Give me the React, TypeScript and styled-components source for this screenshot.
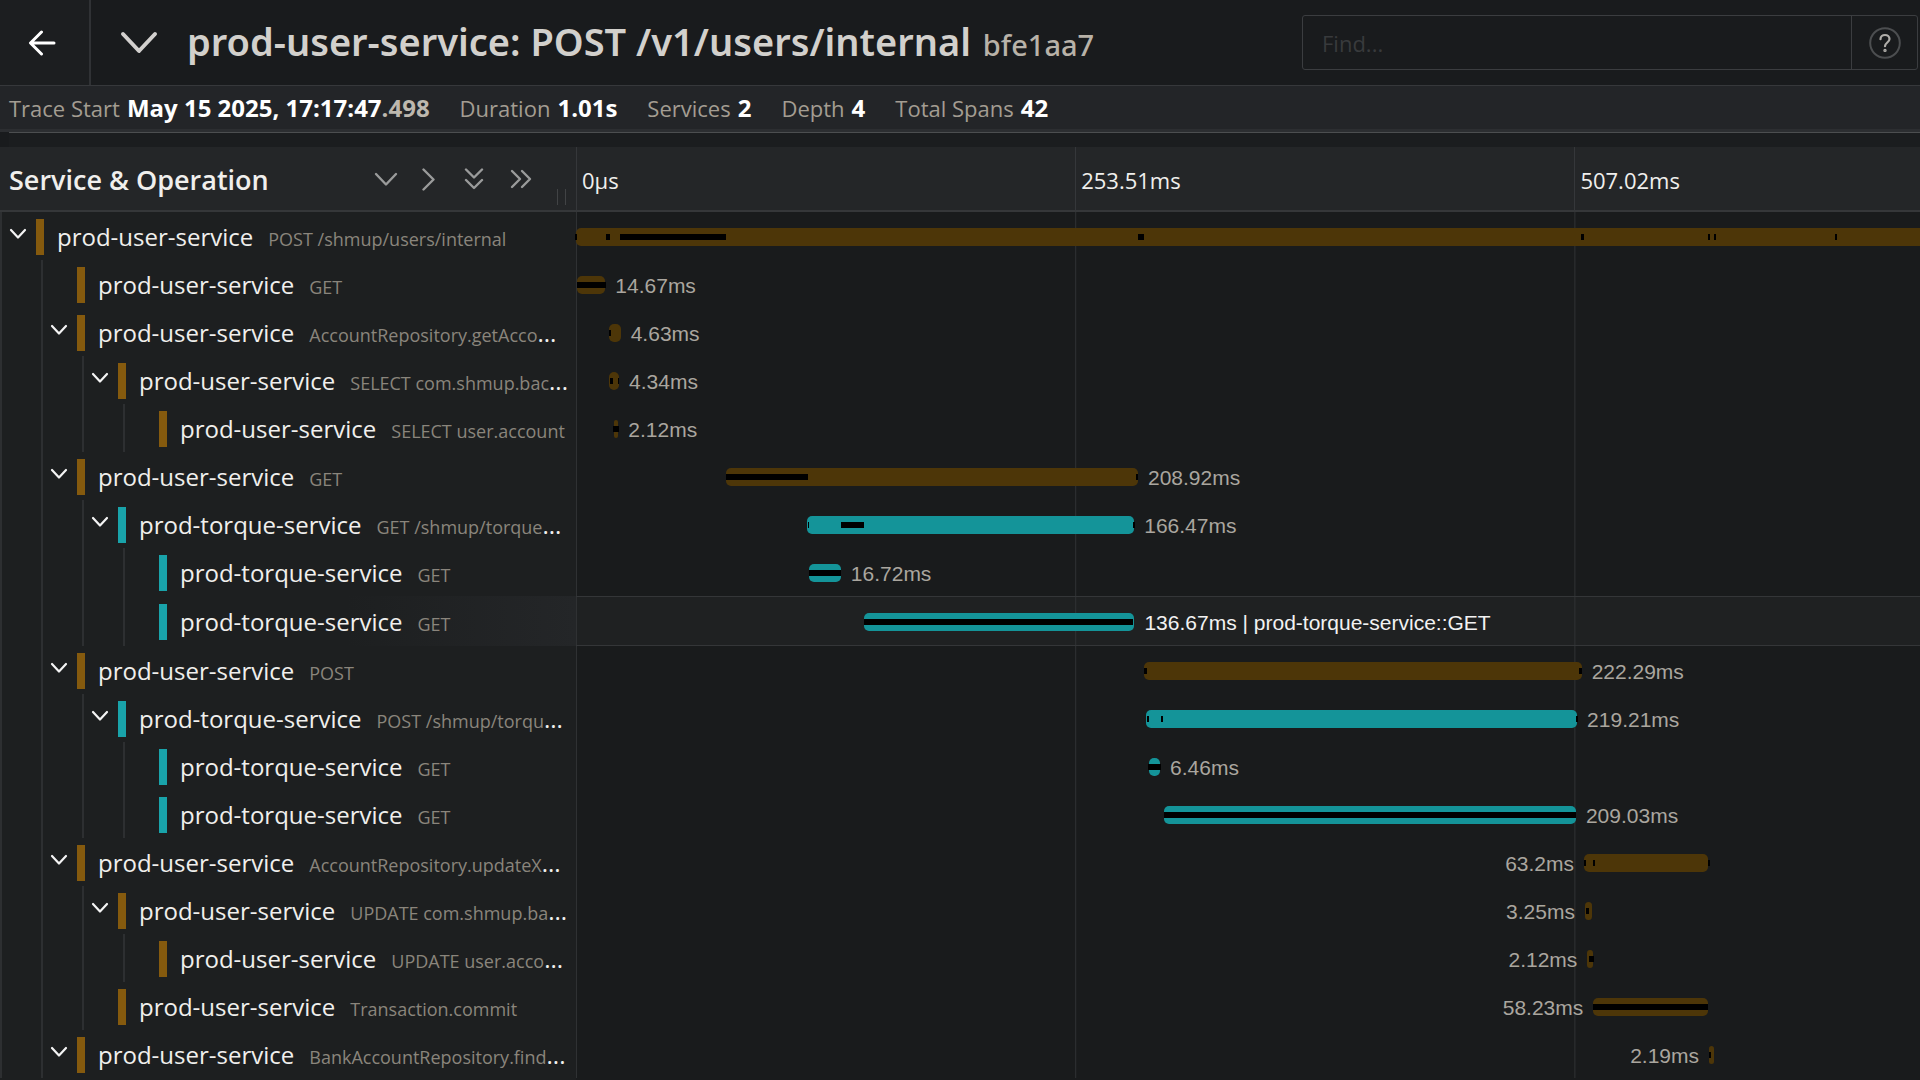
import React from 'react';
import styled, { createGlobalStyle, css } from 'styled-components';

const TOTAL_MS = 1014.04;
const COLORS = {
  user: { swatch: '#855a0e', bar: '#4d3608' },
  torque: { swatch: '#19a3aa', bar: '#149499' },
};

type Service = keyof typeof COLORS;
type Range = [number, number];

interface Span {
  service: Service;
  operation: string;
  clipped?: boolean;
  depth: number;
  open?: boolean;
  range: Range;
  critical: Range[];
  label?: string;
  labelLeft?: boolean;
  active?: boolean;
}

const SPANS: Span[] = [
  { service: 'user', operation: 'POST /shmup/users/internal', depth: 0, open: true, range: [0, 1014.04], critical: [[-0.5, 0.5], [15.2, 17.5], [22.3, 76.2], [285.2, 288.4], [510.6, 511.9], [575, 575.7], [578, 578.7], [639.6, 640.3]] },
  { service: 'user', operation: 'GET', depth: 1, range: [0.5, 14.9], critical: [[0.4, 15.3]], label: '14.67ms' },
  { service: 'user', operation: 'AccountRepository.getAcco', clipped: true, depth: 1, open: true, range: [17, 22.7], critical: [[17, 18]], label: '4.63ms' },
  { service: 'user', operation: 'SELECT com.shmup.bac', clipped: true, depth: 2, open: true, range: [17, 21.9], critical: [[17.3, 19], [21.3, 22.1]], label: '4.34ms' },
  { service: 'user', operation: 'SELECT user.account', depth: 3, range: [19.5, 21.5], critical: [[19, 21.8]], label: '2.12ms' },
  { service: 'user', operation: 'GET', depth: 1, open: true, range: [76.2, 285.4], critical: [[76.2, 117.7], [284.4, 285.6]], label: '208.92ms' },
  { service: 'torque', operation: 'GET /shmup/torque', clipped: true, depth: 2, open: true, range: [117.1, 283.5], critical: [[117.6, 118.4], [134.5, 146.3], [282.9, 284]], label: '166.47ms' },
  { service: 'torque', operation: 'GET', depth: 3, range: [118.1, 134.5], critical: [[118.1, 134.5]], label: '16.72ms' },
  { service: 'torque', operation: 'GET', depth: 3, range: [146.3, 283.6], critical: [[146.3, 282.9]], label: '136.67ms | prod-torque-service::GET', active: true },
  { service: 'user', operation: 'POST', depth: 1, open: true, range: [288.4, 510.7], critical: [[288.4, 290], [509.3, 511]], label: '222.29ms' },
  { service: 'torque', operation: 'POST /shmup/torqu', clipped: true, depth: 2, open: true, range: [289.5, 508.4], critical: [[290, 290.8], [297, 298.2], [507.8, 508.7]], label: '219.21ms' },
  { service: 'torque', operation: 'GET', depth: 3, range: [290.8, 296.6], critical: [[290.6, 297]], label: '6.46ms' },
  { service: 'torque', operation: 'GET', depth: 3, range: [298.6, 507.8], critical: [[298.4, 507.8]], label: '209.03ms' },
  { service: 'user', operation: 'AccountRepository.updateX', clipped: true, depth: 1, open: true, range: [511.9, 574.9], critical: [[511.9, 513.1], [516.6, 517.3], [574.9, 575.9]], label: '63.2ms', labelLeft: true },
  { service: 'user', operation: 'UPDATE com.shmup.ba', clipped: true, depth: 2, open: true, range: [512.4, 516.1], critical: [[512.9, 514.5]], label: '3.25ms', labelLeft: true },
  { service: 'user', operation: 'UPDATE user.acco', clipped: true, depth: 3, range: [513.6, 516.3], critical: [[514.4, 516.8]], label: '2.12ms', labelLeft: true },
  { service: 'user', operation: 'Transaction.commit', depth: 2, range: [516.6, 574.9], critical: [[516.6, 574.9]], label: '58.23ms', labelLeft: true },
  { service: 'user', operation: 'BankAccountRepository.find', clipped: true, depth: 1, open: true, range: [575.4, 577.8], critical: [[575.4, 576.3]], label: '2.19ms', labelLeft: true },
];

const TICKS = ['0μs', '253.51ms', '507.02ms'];

const GlobalStyle = createGlobalStyle`
  * { box-sizing: border-box; }
  body {
    margin: 0;
    background: #191b1d;
    color: #f0efed;
    font-family: 'Open Sans', 'Noto Sans', sans-serif;
  }
  button {
    border: 0;
    padding: 0;
    background: none;
    color: inherit;
    font: inherit;
    cursor: pointer;
  }
`;

const Page = styled.div`
  display: flex;
  flex-direction: column;
  min-height: 100vh;
  overflow: hidden;
`;

const Icon = styled.svg`
  display: block;
  fill: none;
  stroke: currentColor;
  stroke-linecap: round;
  stroke-linejoin: round;
`;

const TopBar = styled.header`
  display: flex;
  align-items: center;
  height: 86px;
  border-bottom: 1px solid #36383b;
`;

const BackButton = styled.button`
  display: flex;
  align-items: center;
  justify-content: center;
  align-self: stretch;
  width: 91px;
  padding-right: 6px;
  border-right: 2px solid #303235;
  background: #1c1e20;
  color: #fff;
`;

const TitleToggle = styled.button`
  margin: 0 29px 0 29px;
  color: #d2d0ce;
`;

const Title = styled.h1`
  flex: 1;
  margin: 0;
  color: #d2d0cc;
  font-family: 'Noto Sans', sans-serif;
  font-size: 38px;
  font-weight: 600;
  line-height: 52px;
  white-space: nowrap;
`;

const TraceId = styled.small`
  margin-left: 2px;
  color: #b8b2a8;
  font-size: 29px;
  font-weight: 500;
`;

const Search = styled.form`
  display: flex;
  width: 616px;
  height: 55px;
  margin-right: 2px;
  border: 1px solid #3b3d40;
  border-radius: 3px;
`;

const SearchInput = styled.input`
  flex: 1;
  min-width: 0;
  padding: 0 19px;
  border: 0;
  outline: 0;
  background: transparent;
  color: #d2d0cc;
  font: inherit;
  font-size: 22px;
  &::placeholder {
    color: #383a3c;
    opacity: 1;
  }
`;

const HelpButton = styled.button`
  display: flex;
  align-items: center;
  justify-content: center;
  width: 66px;
  border-left: 1px solid #3b3d40;
  color: #b0aeaa;
`;

const Summary = styled.dl`
  display: flex;
  align-items: center;
  gap: 30px;
  height: 46px;
  margin: 0;
  padding-left: 9px;
  border-bottom: 3px solid #2c2e31;
  background: #232528;
  font-size: 22px;
  white-space: nowrap;
`;

const Fact = styled.div`
  display: flex;
  align-items: baseline;
  gap: 7px;
`;

const FactName = styled.dt`
  color: #a39d92;
`;

const FactValue = styled.dd`
  margin: 0;
  color: #fff;
  font-size: 24px;
  line-height: 32px;
  font-weight: 700;
`;

const Muted = styled.span`
  color: #bdb8af;
`;

const Divider = styled.div`
  height: 15px;
  margin-left: 9px;
  border-top: 1px solid #4c4e50;
  background: #1b1d1f;
`;

const HeaderRow = styled.div`
  display: grid;
  grid-template-columns: 30vw 104vw;
  height: 65px;
  border-bottom: 2px solid #353739;
  background: #242628;
`;

const NameHeader = styled.div`
  display: flex;
  align-items: center;
  padding: 2px 10px 0 9px;
`;

const NameTitle = styled.h2`
  flex: 1;
  margin: 0;
  font-size: 27px;
  font-weight: 600;
  line-height: 36px;
`;

const Collapsers = styled.div`
  display: flex;
  align-items: center;
  gap: 19px;
  margin-right: 24px;
  color: #9a9b9b;
`;

const Grip = styled.div`
  align-self: flex-end;
  width: 9px;
  height: 16px;
  margin-bottom: 5px;
  border: solid #414345;
  border-width: 0 1px;
`;

const Ticks = styled.div`
  display: grid;
  grid-template-columns: repeat(4, 26vw);
`;

const Tick = styled.div`
  display: flex;
  align-items: center;
  padding: 2px 5px 0 5px;
  border-left: 1px solid #35373a;
  font-size: 22px;
`;

const Rows = styled.div`
  flex: 1;
  background: linear-gradient(to right, #1d1f20 30vw, #191b1c 30vw);
`;

const Row = styled.div<{ $active?: boolean }>`
  display: grid;
  grid-template-columns: 30vw 104vw;
  height: ${(p) => (p.$active ? '50px' : '48px')};
`;

const NameCell = styled.div<{ $active?: boolean }>`
  display: flex;
  align-items: center;
  overflow: hidden;
  white-space: nowrap;
  ${(p) => p.$active && css`
    background: linear-gradient(to right, transparent 60%, #242628);
  `}
`;

const Guide = styled.span`
  flex: none;
  align-self: stretch;
  display: flex;
  align-items: center;
  width: 41px;
  border-left: 2px solid #2d2f31;
  &:last-of-type {
    width: 36px;
  }
`;

const RowToggle = styled.button`
  margin: 0 0 4px 7px;
  color: #f4f4f4;
`;

const Swatch = styled.i<{ $service: Service }>`
  flex: none;
  width: 8px;
  height: 36px;
  margin: 2px 13px 0 0;
  background: ${(p) => COLORS[p.$service].swatch};
`;

const ServiceName = styled.div`
  padding-top: 3px;
  font-size: 24px;
  line-height: 34px;
`;

const Operation = styled.small`
  margin-left: 15px;
  color: #8a857c;
  font-size: 18px;
  font-weight: 400;
`;

const Track = styled.div<{ $active?: boolean }>`
  display: flex;
  align-items: center;
  padding-top: 2px;
  background: linear-gradient(to right, #2f3133 1px, transparent 1px) 0 0 / 26vw 100%;
  ${(p) => p.$active && css`
    border: solid #343638;
    border-width: 1px 0;
    background-color: #1f2122;
  `}
`;

const Lead = styled.div`
  flex: none;
  display: flex;
  justify-content: flex-end;
`;

const Bar = styled.div<{ $service: Service }>`
  flex: none;
  position: relative;
  height: 18px;
  border-radius: 5px;
  background: ${(p) => COLORS[p.$service].bar};
`;

const Critical = styled.span`
  position: absolute;
  top: 6px;
  height: 6px;
  background: #000;
`;

const Duration = styled.span<{ $active?: boolean }>`
  padding: 2px 10px 0 10px;
  color: ${(p) => (p.$active ? '#f2f2f2' : '#aaa69f')};
  font-family: 'Liberation Sans', Arial, sans-serif;
  font-size: 21px;
  line-height: 24px;
  white-space: nowrap;
`;

const pct = (ms: number, of: number) => `${(ms / of) * 100}%`;

function SpanRow({ span }: { span: Span }) {
  const [start, end] = span.range;
  const length = end - start;
  const label = span.label && <Duration $active={span.active}>{span.label}</Duration>;
  return (
    <Row $active={span.active}>
      <NameCell $active={span.active}>
        {Array.from({ length: span.depth + 1 }, (_, i) => (
          <Guide key={i}>
            {i === span.depth && span.open && (
              <RowToggle type="button" aria-label="Collapse span">
                <Icon width="18" height="12" viewBox="0 0 18 12" strokeWidth="2.2">
                  <path d="M2 2l7 7.5L16 2" />
                </Icon>
              </RowToggle>
            )}
          </Guide>
        ))}
        <Swatch $service={span.service} />
        <ServiceName>
          prod-{span.service}-service
          <Operation>{span.operation}</Operation>
          {span.clipped && '...'}
        </ServiceName>
      </NameCell>
      <Track $active={span.active}>
        <Lead style={{ width: pct(start, TOTAL_MS) }}>{span.labelLeft && label}</Lead>
        <Bar $service={span.service} style={{ width: pct(length, TOTAL_MS) }}>
          {span.critical.map(([from, to]) => (
            <Critical key={from} style={{ left: pct(from - start, length), width: pct(to - from, length) }} />
          ))}
        </Bar>
        {!span.labelLeft && label}
      </Track>
    </Row>
  );
}

export default function App() {
  return (
    <Page>
      <GlobalStyle />
      <TopBar>
        <BackButton type="button" aria-label="Back">
          <Icon width="28" height="26" viewBox="0 0 28 26" strokeWidth="3">
            <path d="M13.5 2L2.5 13l11 11M3 13h23" />
          </Icon>
        </BackButton>
        <TitleToggle type="button" aria-label="Collapse header">
          <Icon width="38" height="24" viewBox="0 0 38 24" strokeWidth="4">
            <path d="M3 3l16 17L35 3" />
          </Icon>
        </TitleToggle>
        <Title>
          prod-user-service: POST /v1/users/internal <TraceId>bfe1aa7</TraceId>
        </Title>
        <Search>
          <SearchInput type="text" placeholder="Find..." aria-label="Find" />
          <HelpButton type="button" aria-label="Help">
            <Icon width="32" height="32" viewBox="0 0 32 32" strokeWidth="2">
              <circle cx="16" cy="16" r="14.8" stroke="#4c4e50" />
              <path d="M11.5 12.2c0-2.6 2-4.2 4.5-4.2s4.5 1.6 4.5 4c0 3.4-4.5 3.6-4.5 7.2" strokeWidth="2.2" />
              <circle cx="16" cy="23.4" r="0.7" />
            </Icon>
          </HelpButton>
        </Search>
      </TopBar>
      <Summary>
        <Fact>
          <FactName>Trace Start</FactName>
          <FactValue>May 15 2025, 17:17:47<Muted>.498</Muted></FactValue>
        </Fact>
        <Fact><FactName>Duration</FactName><FactValue>1.01s</FactValue></Fact>
        <Fact><FactName>Services</FactName><FactValue>2</FactValue></Fact>
        <Fact><FactName>Depth</FactName><FactValue>4</FactValue></Fact>
        <Fact><FactName>Total Spans</FactName><FactValue>42</FactValue></Fact>
      </Summary>
      <Divider />
      <HeaderRow>
        <NameHeader>
          <NameTitle>Service &amp; Operation</NameTitle>
          <Collapsers>
            <button type="button" aria-label="Expand one level">
              <Icon width="26" height="24" viewBox="0 0 26 24" strokeWidth="2.4"><path d="M4 6l10 10.5L24 6" /></Icon>
            </button>
            <button type="button" aria-label="Collapse one level">
              <Icon width="26" height="24" viewBox="0 0 26 24" strokeWidth="2.4"><path d="M6.5 1.5l10 10-10 10" /></Icon>
            </button>
            <button type="button" aria-label="Expand all">
              <Icon width="26" height="24" viewBox="0 0 26 24" strokeWidth="2.4"><path d="M4 1.5l8 8 8-8M4 12l8 8 8-8" /></Icon>
            </button>
            <button type="button" aria-label="Collapse all">
              <Icon width="26" height="24" viewBox="0 0 26 24" strokeWidth="2.4"><path d="M5 3l8 8-8 8M15 3l8 8-8 8" /></Icon>
            </button>
          </Collapsers>
          <Grip />
        </NameHeader>
        <Ticks>
          {TICKS.map((t) => <Tick key={t}>{t}</Tick>)}
        </Ticks>
      </HeaderRow>
      <Rows>
        {SPANS.map((span, i) => <SpanRow key={i} span={span} />)}
      </Rows>
    </Page>
  );
}
